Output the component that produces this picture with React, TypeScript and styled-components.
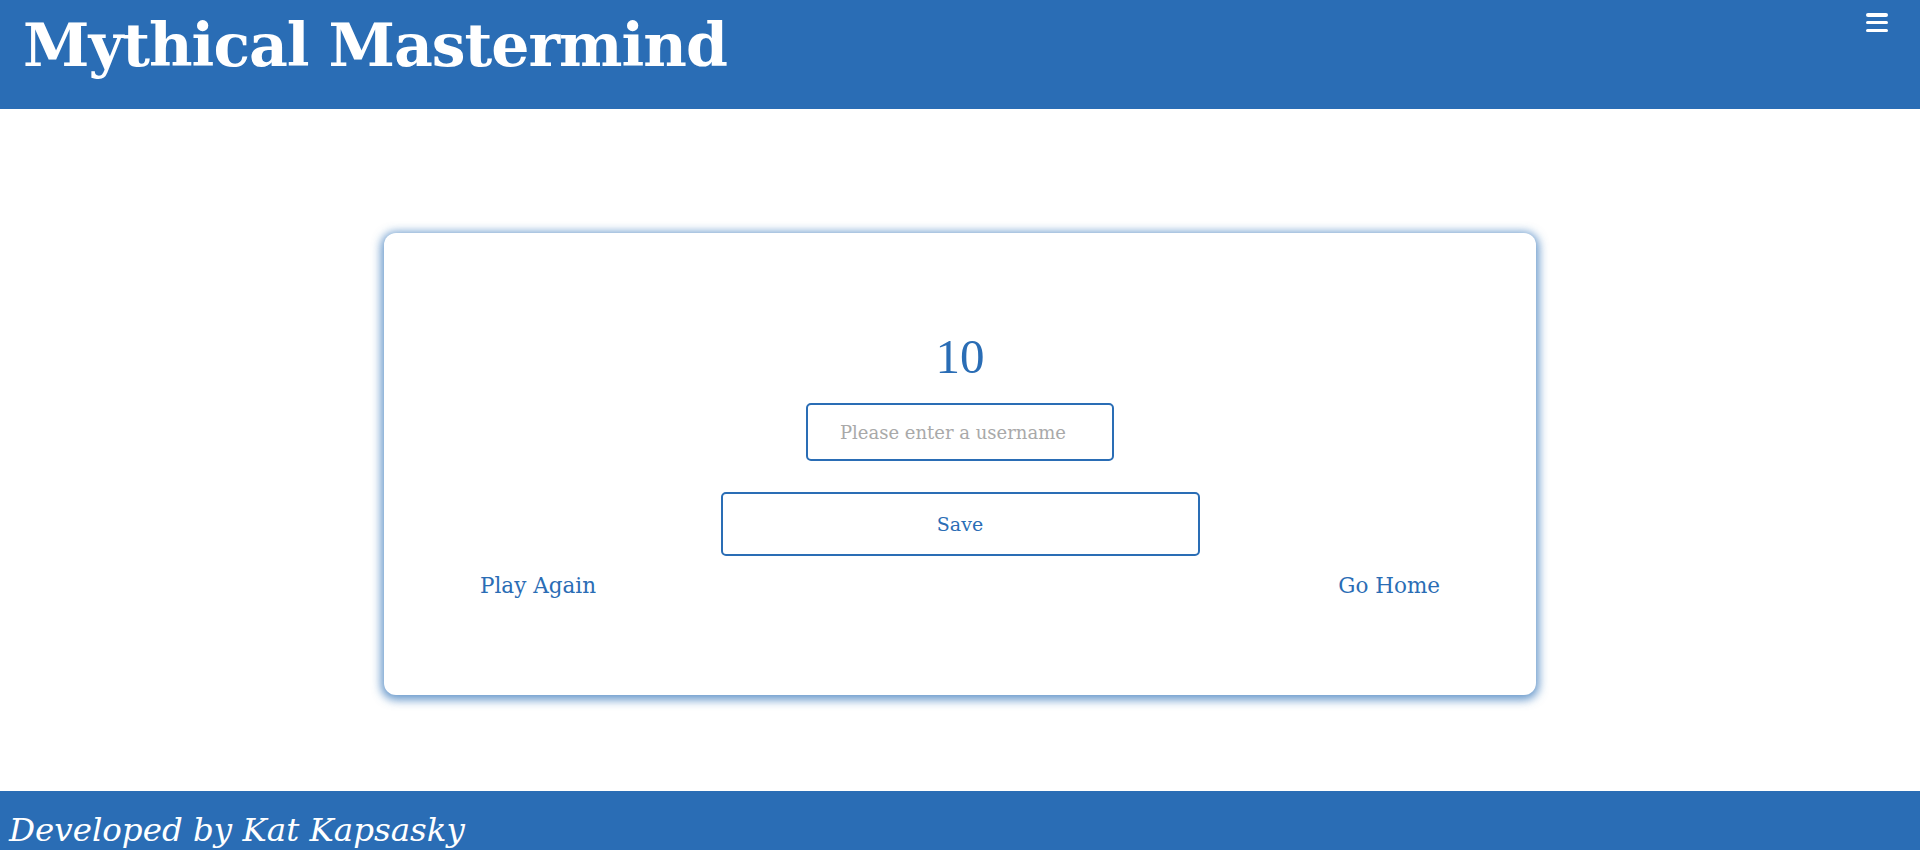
import React from 'react';
import styled, { createGlobalStyle } from 'styled-components';

const blue = '#2a6db5';

const GlobalStyle = createGlobalStyle`
    html, body {
        margin: 0;
        padding: 0;
        background: #ffffff;
        font-family: 'DejaVu Serif', 'Liberation Serif', serif;
    }
`;

const Page = styled.div`
    display: flex;
    flex-direction: column;
    min-height: 100vh;
`;

const Header = styled.header`
    height: 109px;
    background: ${blue};
    display: flex;
    justify-content: space-between;
    align-items: flex-start;
    padding: 0 32px 0 23px;
    box-sizing: border-box;
`;

const Title = styled.h1`
    margin: 7px 0 0 0;
    color: #ffffff;
    font-family: 'DejaVu Serif', serif;
    font-weight: bold;
    font-size: 60px;
    letter-spacing: -1px;
    line-height: 76px;
`;

const MenuButton = styled.button`
    margin-top: 13px;
    background: none;
    border: none;
    padding: 0;
    width: 22px;
    height: 19px;
    display: flex;
    flex-direction: column;
    justify-content: space-between;
    cursor: pointer;

    span {
        display: block;
        height: 3.5px;
        border-radius: 2px;
        background: #ffffff;
    }
`;

const Main = styled.main`
    padding: 124px 0 96px;
    display: flex;
    justify-content: center;
`;

const Card = styled.section`
    width: 1152px;
    height: 462px;
    box-sizing: border-box;
    background: #ffffff;
    border-radius: 12px;
    box-shadow: 0 2px 10px 3px rgba(42, 109, 181, 0.7);
    display: flex;
    flex-direction: column;
    align-items: center;
    padding: 94px 95px 0;
`;

const Score = styled.h2`
    margin: 0;
    color: ${blue};
    font-family: 'Liberation Serif', serif;
    font-weight: normal;
    font-size: 49px;
    line-height: 60px;
`;

const NameInput = styled.input`
    margin-top: 16px;
    width: 308px;
    height: 58px;
    box-sizing: border-box;
    border: 2px solid ${blue};
    border-radius: 5px;
    padding: 0 20px 0 32px;
    text-align: left;
    font-family: 'DejaVu Serif', serif;
    font-size: 18px;
    color: ${blue};
    outline: none;

    &::placeholder {
        color: #a9a9a9;
    }
`;

const SaveButton = styled.button`
    margin-top: 31px;
    width: 479px;
    height: 64px;
    box-sizing: border-box;
    background: #ffffff;
    border: 2px solid ${blue};
    border-radius: 5px;
    color: ${blue};
    font-family: 'DejaVu Serif', serif;
    font-size: 19px;
    cursor: pointer;
`;

const Links = styled.div`
    align-self: stretch;
    display: flex;
    justify-content: space-between;
    margin-top: 15px;
    padding: 0 1px;
`;

const LinkText = styled.a`
    color: ${blue};
    font-family: 'DejaVu Serif', serif;
    font-size: 21.5px;
    line-height: 30px;
    text-decoration: none;
    cursor: pointer;
`;

const Footer = styled.footer`
    background: ${blue};
    padding: 14px 9px 20px;
`;

const FooterText = styled.p`
    margin: 0;
    color: #ffffff;
    font-family: 'DejaVu Serif', serif;
    font-style: italic;
    font-size: 32.5px;
    line-height: 50px;
`;

export default function App() {
    return (
        <Page>
            <GlobalStyle />
            <Header>
                <Title>Mythical Mastermind</Title>
                <MenuButton aria-label="menu">
                    <span />
                    <span />
                    <span />
                </MenuButton>
            </Header>
            <Main>
                <Card>
                    <Score>10</Score>
                    <NameInput placeholder="Please enter a username" />
                    <SaveButton>Save</SaveButton>
                    <Links>
                        <LinkText>Play Again</LinkText>
                        <LinkText>Go Home</LinkText>
                    </Links>
                </Card>
            </Main>
            <Footer>
                <FooterText>Developed by Kat Kapsasky</FooterText>
            </Footer>
        </Page>
    );
}
